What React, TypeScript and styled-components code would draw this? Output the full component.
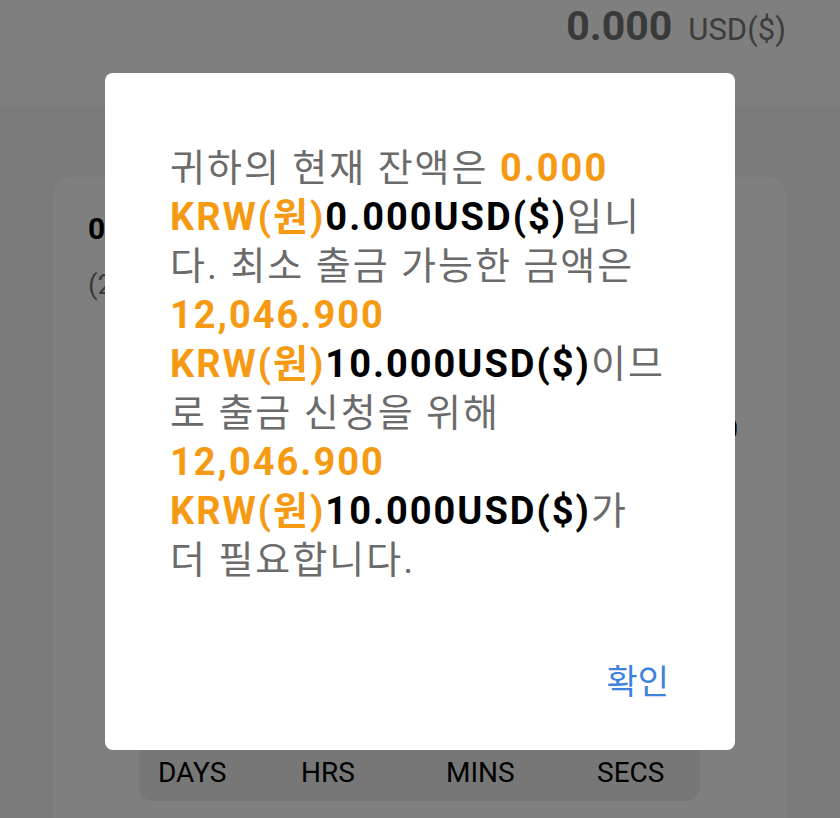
import styled, { createGlobalStyle } from "styled-components";

const GlobalStyle = createGlobalStyle`
  html, body {
    margin: 0;
    padding: 0;
    background: #ffffff;
  }
  body {
    font-family: Roboto, "Noto Sans CJK KR", sans-serif;
  }
`;

const units = ["DAYS", "HRS", "MINS", "SECS"];

export default function App() {
  return (
    <>
      <GlobalStyle />
      <Page>
        <Header>
          <Balance>0.000</Balance>
          <Currency>USD($)</Currency>
        </Header>
        <Body>
          <Card>
            <Amount>0.000 KRW(원)</Amount>
            <SubAmount>(2,500 원)</SubAmount>
            <TimerRow>
              <TimerValue>00:00:00:00</TimerValue>
            </TimerRow>
            <Countdown>
              {units.map((u) => (
                <Unit key={u}>{u}</Unit>
              ))}
            </Countdown>
          </Card>
        </Body>
      </Page>

      <Backdrop>
        <Dialog>
          <Message>
            귀하의 현재 잔액은 <Orange>0.000 KRW(원)</Orange>
            <Strong>0.000USD($)</Strong>입니다. 최소 출금 가능한 금액은{" "}
            <Orange>12,046.900 KRW(원)</Orange>
            <Strong>10.000USD($)</Strong>이므로 출금 신청을 위해{" "}
            <Orange>12,046.900 KRW(원)</Orange>
            <Strong>10.000USD($)</Strong>가 더 필요합니다.
          </Message>
          <Actions>
            <ConfirmButton>확인</ConfirmButton>
          </Actions>
        </Dialog>
      </Backdrop>
    </>
  );
}

const Page = styled.div`
  min-height: 818px;
  background: #ffffff;
  display: flex;
  flex-direction: column;
`;

const Header = styled.div`
  height: 105px;
  box-sizing: border-box;
  display: flex;
  justify-content: flex-end;
  align-items: baseline;
  gap: 16px;
  padding: 2px 54px 0 0;
`;

const Balance = styled.span`
  font-size: 41px;
  font-weight: 700;
  color: #747474;
`;

const Currency = styled.span`
  font-size: 31px;
  color: #7a7a7a;
`;

const Body = styled.div`
  flex: 1;
  background: #f6f6f6;
  padding: 72px 54px 0 53px;
`;

const Card = styled.div`
  background: #ffffff;
  border-radius: 18px;
  padding: 30px 86px 40px 35px;
  display: flex;
  flex-direction: column;
`;

const Amount = styled.div`
  font-size: 30px;
  font-weight: 700;
  color: #000000;
  line-height: 44px;
`;

const SubAmount = styled.div`
  font-size: 28px;
  color: #777777;
  line-height: 44px;
  margin-top: 12px;
`;

const TimerRow = styled.div`
  display: flex;
  justify-content: flex-end;
  margin: 104px -38px 0 0;
`;

const TimerValue = styled.span`
  font-size: 30px;
  font-weight: 700;
  color: #000000;
`;

const Countdown = styled.div`
  margin: 291px 0 0 51px;
  background: #eeeeee;
  border-radius: 14px;
  height: 64px;
  box-sizing: border-box;
  display: grid;
  grid-template-columns: repeat(4, 1fr);
  align-items: start;
  padding: 18px 14px 0 19px;
`;

const Unit = styled.span`
  font-size: 28px;
  color: #000000;
  line-height: 36px;
  &:nth-child(2) {
    padding-left: 11px;
  }
  &:nth-child(3) {
    padding-left: 24px;
  }
  &:nth-child(4) {
    padding-left: 43px;
  }
`;

const Backdrop = styled.div`
  position: fixed;
  inset: 0;
  background: rgba(0, 0, 0, 0.5);
  display: flex;
  align-items: center;
  justify-content: center;
`;

const Dialog = styled.div`
  width: 630px;
  box-sizing: border-box;
  background: #ffffff;
  border-radius: 8px;
  padding: 71px 66px 48px 65px;
  margin-top: 5px;
`;

const Message = styled.p`
  margin: 0;
  font-size: 38px;
  line-height: 49px;
  letter-spacing: 2px;
  color: #6b6b6b;
`;

const Orange = styled.span`
  color: #f59a12;
  font-weight: 700;
`;

const Strong = styled.span`
  color: #000000;
  font-weight: 700;
`;

const Actions = styled.div`
  display: flex;
  justify-content: flex-end;
  margin-top: 77px;
`;

const ConfirmButton = styled.button`
  border: none;
  background: none;
  padding: 0;
  font-family: Roboto, "Noto Sans CJK KR", sans-serif;
  font-size: 34px;
  line-height: 40px;
  color: #3f82dc;
  cursor: pointer;
`;
